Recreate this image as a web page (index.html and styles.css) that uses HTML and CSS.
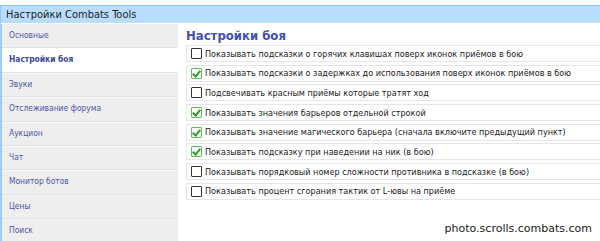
FILE: index.html
```html
<!DOCTYPE html>
<html lang="ru">
<head>
    <meta charset="UTF-8">
    <title>Настройки Combats Tools</title>
    <link rel="stylesheet" href="styles.css">
</head>
<body>
    <div class="window">
        <header class="title-bar">Настройки Combats Tools</header>

        <div class="layout">
            <nav class="sidebar">
                <a class="nav-item">Основные</a>
                <a class="nav-item active">Настройки боя</a>
                <a class="nav-item">Звуки</a>
                <a class="nav-item">Отслеживание форума</a>
                <a class="nav-item">Аукцион</a>
                <a class="nav-item">Чат</a>
                <a class="nav-item">Монитор ботов</a>
                <a class="nav-item">Цены</a>
                <a class="nav-item">Поиск</a>
            </nav>

            <main class="content">
                <h2>Настройки боя</h2>
                <label class="option"><span class="box"></span>Показывать подсказки о горячих клавишах поверх иконок приёмов в бою</label>
                <label class="option"><span class="box checked"></span>Показывать подсказки о задержках до использования поверх иконок приёмов в бою</label>
                <label class="option"><span class="box"></span>Подсвечивать красным приёмы которые тратят ход</label>
                <label class="option"><span class="box checked"></span>Показывать значения барьеров отдельной строкой</label>
                <label class="option"><span class="box checked"></span>Показывать значение магического барьера (сначала включите предыдущий пункт)</label>
                <label class="option"><span class="box checked"></span>Показывать подсказку при наведении на ник (в бою)</label>
                <label class="option"><span class="box"></span>Показывать порядковый номер сложности противника в подсказке (в бою)</label>
                <label class="option"><span class="box"></span>Показывать процент сгорания тактик от L-ювы на приёме</label>
            </main>
        </div>

        <div class="watermark">photo.scrolls.combats.com</div>
    </div>
</body>
</html>
```

FILE: styles.css
```css
body {
    margin: 0;
    padding: 0;
    background-color: #ffffff;
    font-family: 'DejaVu Sans Condensed', 'DejaVu Sans', sans-serif;
    color: #222;
    overflow: hidden;
}
.window {
    position: relative;
    height: 241px;
    padding-top: 5px;
    box-sizing: border-box;
}
.title-bar {
    height: 17px;
    line-height: 17px;
    padding-left: 5px;
    font-size: 11px;
    background-color: #b9ddff;
    border-top: 1px solid #8ec5fb;
    border-left: 1px solid #8ec5fb;
    border-bottom: 1px solid #ffffff;
}
.layout {
    display: flex;
}
.sidebar {
    width: 176px;
    height: 218px;
    flex-shrink: 0;
    background-color: #eeeeee;
    border-left: 2px solid #9ccbf5;
    display: flex;
    flex-direction: column;
}
.nav-item {
    display: block;
    height: 23.4px;
    line-height: 23px;
    padding-left: 7px;
    font-size: 8.4px;
    color: #4b55a8;
    border-bottom: 1px solid #e2e2e2;
    box-shadow: 0 1px 0 #f7f7f7;
    flex-shrink: 0;
}
.nav-item.active {
    background-color: #ffffff;
    font-weight: bold;
    color: #3c4a9c;
}
.content {
    flex: 1;
    padding: 0 0 0 8px;
}
.content h2 {
    margin: 4px 0 2px 0;
    font-size: 13px;
    font-weight: bold;
    color: #3f51b0;
}
.option {
    display: flex;
    align-items: center;
    height: 13px;
    margin-bottom: 2.7px;
    padding: 1px 0 1px 4px;
    font-size: 9px;
    color: #222;
    border: 1px solid #e6e6e6;
    border-right: none;
    white-space: nowrap;
}
.box {
    position: relative;
    width: 9px;
    height: 9px;
    margin-right: 3px;
    border: 1px solid #333;
    border-radius: 1px;
    background-color: #fff;
    flex-shrink: 0;
}
.box.checked {
    border-color: #58c654;
}
.box.checked::after {
    content: "";
    position: absolute;
    left: 2px;
    top: 0px;
    width: 3px;
    height: 6px;
    border: solid #2e9a2e;
    border-width: 0 2px 2px 0;
    transform: rotate(40deg);
}
.watermark {
    position: absolute;
    right: 8px;
    bottom: 6px;
    font-family: 'DejaVu Sans', sans-serif;
    font-size: 11px;
    color: #222;
    text-shadow: 0 0 2px #fff, 0 0 2px #fff;
}
```
